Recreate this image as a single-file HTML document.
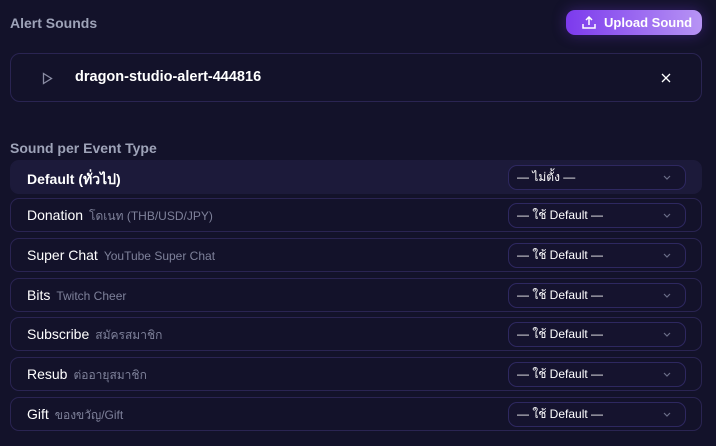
<!DOCTYPE html><html><head><meta charset="utf-8"><style>
body{margin:0;width:716px;height:446px;background:#13122a;font-family:"Liberation Sans","Noto Sans CJK SC",sans-serif;color:#fff;position:relative;overflow:hidden}
.a{position:absolute}
.h{color:#9ea3b8;font-weight:bold;font-size:14px}
.btn{left:566px;top:10px;width:136px;height:25px;border-radius:9px;background:linear-gradient(90deg,#7c3aed,#b794f4);box-shadow:0 0 14px rgba(124,58,237,.35);font-weight:bold;font-size:13px;line-height:25px}
.card{left:10px;top:53px;width:690px;height:47px;border:1px solid #2a2452;border-radius:10px}
.row{left:10px;width:690px;height:32px;border:1px solid #2a2452;border-radius:9px;font-size:14px}
.row .t{position:absolute;left:16px;top:8px}
.row .s{color:#7e819a;font-size:12px;margin-left:6px}
.sel{position:absolute;left:497px;top:4px;width:176px;height:23px;border:1px solid #2e2860;border-radius:9px;background:#15132e;font-size:12px;line-height:23px}
.sel span{position:absolute;left:8px}
.sel svg{position:absolute;right:14px;top:9px}
</style></head><body>
<div class="a h" style="left:10px;top:15px">Alert Sounds</div>
<div class="a btn"><svg class="a" style="left:16px;top:6px" width="14" height="13" viewBox="0 0 14 13" fill="none" stroke="#fff" stroke-width="1.5"><path d="M1 8v4h12V8M7 9V1M4 4l3-3 3 3"/></svg><span class="a" style="left:38px">Upload Sound</span></div>
<div class="a card"><svg class="a" style="left:31px;top:18px" width="11" height="13" viewBox="0 0 11 13" fill="none" stroke="#8a8ca3" stroke-width="1.3"><path d="M1.5 1.5v10l8-5z"/></svg><span class="a" style="left:64px;top:15px;font-size:14.5px;font-weight:bold">dragon-studio-alert-444816</span><svg class="a" style="left:650px;top:19px" width="10" height="10" viewBox="0 0 10 10" stroke="#fff" stroke-width="1.3"><path d="M1 1l8 8M9 1l-8 8"/></svg></div>
<div class="a h" style="left:10px;top:140px">Sound per Event Type</div>
<div class="a row" style="top:160px;border-color:#1c1a3a;background:#1c1a3a;height:32px"><span class="t" style="font-weight:bold">Default (ทั่วไป)</span><div class="sel"><span>— ไม่ตั้ง —</span><svg width="8" height="5" viewBox="0 0 8 5" fill="none" stroke="#6b6e88" stroke-width="1.2"><path d="M1 1l3 3 3-3"/></svg></div></div>
<div class="a row" style="top:198px"><span class="t">Donation<span class="s">โดเนท (THB/USD/JPY)</span></span><div class="sel"><span>— ใช้ Default —</span><svg width="8" height="5" viewBox="0 0 8 5" fill="none" stroke="#6b6e88" stroke-width="1.2"><path d="M1 1l3 3 3-3"/></svg></div></div>
<div class="a row" style="top:238px"><span class="t">Super Chat<span class="s">YouTube Super Chat</span></span><div class="sel"><span>— ใช้ Default —</span><svg width="8" height="5" viewBox="0 0 8 5" fill="none" stroke="#6b6e88" stroke-width="1.2"><path d="M1 1l3 3 3-3"/></svg></div></div>
<div class="a row" style="top:278px"><span class="t">Bits<span class="s">Twitch Cheer</span></span><div class="sel"><span>— ใช้ Default —</span><svg width="8" height="5" viewBox="0 0 8 5" fill="none" stroke="#6b6e88" stroke-width="1.2"><path d="M1 1l3 3 3-3"/></svg></div></div>
<div class="a row" style="top:317px"><span class="t">Subscribe<span class="s">สมัครสมาชิก</span></span><div class="sel"><span>— ใช้ Default —</span><svg width="8" height="5" viewBox="0 0 8 5" fill="none" stroke="#6b6e88" stroke-width="1.2"><path d="M1 1l3 3 3-3"/></svg></div></div>
<div class="a row" style="top:357px"><span class="t">Resub<span class="s">ต่ออายุสมาชิก</span></span><div class="sel"><span>— ใช้ Default —</span><svg width="8" height="5" viewBox="0 0 8 5" fill="none" stroke="#6b6e88" stroke-width="1.2"><path d="M1 1l3 3 3-3"/></svg></div></div>
<div class="a row" style="top:397px"><span class="t">Gift<span class="s">ของขวัญ/Gift</span></span><div class="sel"><span>— ใช้ Default —</span><svg width="8" height="5" viewBox="0 0 8 5" fill="none" stroke="#6b6e88" stroke-width="1.2"><path d="M1 1l3 3 3-3"/></svg></div></div>
</body></html>
